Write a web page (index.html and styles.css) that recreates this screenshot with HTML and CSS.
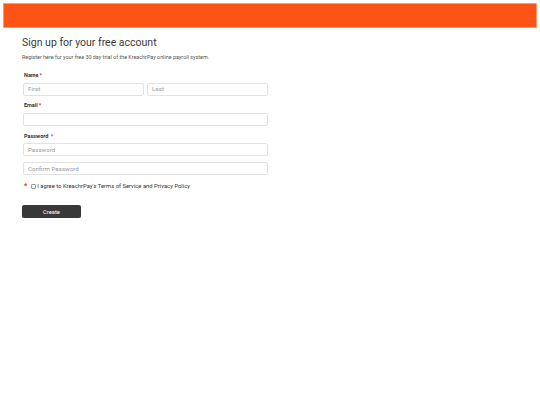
FILE: index.html
```html
<!DOCTYPE html>
<html lang="en">
<head>
<meta charset="utf-8">
<title>Sign up</title>
<link rel="stylesheet" href="styles.css">
</head>
<body>
<header class="topbar"></header>
<main class="content">
  <h1 class="title">Sign up for your free account</h1>
  <p class="subtitle">Register here for your free 30 day trial of the KreachrPay online payroll system.</p>
  <form class="form">
    <label class="label label-name">Name<span class="req">*</span></label>
    <div class="row">
      <input class="field" type="text" placeholder="First">
      <input class="field" type="text" placeholder="Last">
    </div>
    <label class="label label-email">Email<span class="req">*</span></label>
    <input class="field field-email" type="text">
    <label class="label label-pass">Password <span class="req">*</span></label>
    <input class="field field-pass" type="password" placeholder="Password">
    <input class="field field-confirm" type="password" placeholder="Confirm Password">
    <div class="agree">
      <span class="req req-agree">*</span>
      <input class="check" type="checkbox">
      <span class="agree-text">I agree to KreachrPay's Terms of Service and Privacy Policy</span>
    </div>
    <button class="btn" type="button">Create</button>
  </form>
</main>
</body>
</html>
```

FILE: styles.css
```css
* { box-sizing: border-box; }
html, body { margin: 0; padding: 0; background: #fff; }
body {
  font-family: Roboto, "Liberation Sans", sans-serif;
  color: #333;
}
.topbar {
  margin: 3px 3px 0;
  height: 25px;
  background: #fe5316;
  border: 1px solid #fb9a70;
}
.content {
  padding-left: 22px;
}
.title {
  margin: 9px 0 0;
  font-size: 10.5px;
  line-height: 12px;
  font-weight: 400;
  color: #3a3a3a;
}
.subtitle {
  margin: 4px 0 0;
  font-size: 5.4px;
  line-height: 8px;
  color: #555;
}
.form {
  width: 246px;
  padding-left: 1px;
  display: flex;
  flex-direction: column;
}
.label {
  display: block;
  font-size: 5.5px;
  line-height: 8px;
  font-weight: 700;
  color: #333;
  padding-left: 1px;
}
.label-name { margin-top: 10px; }
.label-email { margin-top: 5px; }
.label-pass { margin-top: 6.5px; }
.req { color: #e02a2a; margin-left: 1px; }
.row {
  margin-top: 3.5px;
  display: flex;
  gap: 3px;
}
.row .field { flex: 1; min-width: 0; }
.field {
  height: 13px;
  border: 1px solid #e2e2e2;
  border-radius: 2px;
  padding: 0 4px;
  font-family: Roboto, "Liberation Sans", sans-serif;
  font-size: 6.2px;
  color: #333;
  background: #fff;
  outline: none;
  margin: 0;
}
.field::placeholder { color: #9a9a9a; }
.field-email { margin-top: 4px; }
.field-pass { margin-top: 3px; }
.field-confirm { margin-top: 6px; }
.agree {
  margin-top: 7px;
  height: 8px;
  display: flex;
  align-items: center;
  font-size: 5.85px;
  color: #333;
}
.req-agree { margin: 0 4px 0 1px; font-size: 7px; font-weight: 700; }
.check {
  appearance: none;
  -webkit-appearance: none;
  width: 5px;
  height: 5px;
  margin: 0 1px 0 0;
  border: 0.5px solid #999;
  border-radius: 1px;
  background: #fff;
}
.btn {
  margin-top: 15px;
  margin-left: -1px;
  width: 59px;
  height: 13px;
  background: #383838;
  color: #fff;
  border: none;
  border-radius: 2px;
  font-family: Roboto, "Liberation Sans", sans-serif;
  font-size: 5.8px;
  padding: 0;
  box-shadow: 0 1px 1px rgba(0,0,0,0.2);
}
```
